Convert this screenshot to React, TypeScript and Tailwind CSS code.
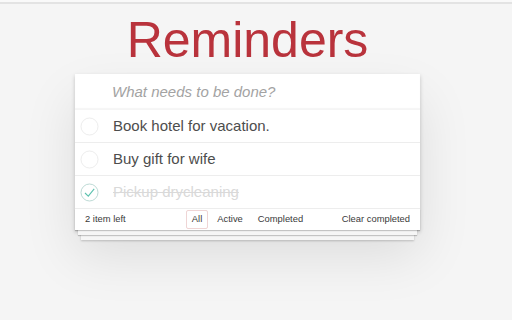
import React from "react";

const items = [
  { text: "Book hotel for vacation.", done: false },
  { text: "Buy gift for wife", done: false },
  { text: "Pickup drycleaning", done: true },
];

function Circle({ done }: { done: boolean }) {
  return (
    <svg width="19" height="19" viewBox="0 0 19 19" className="shrink-0">
      <circle cx="9.5" cy="9.5" r="8.5" fill="none" stroke={done ? "#bddad5" : "#ededed"} strokeWidth="1" />
      {done && (
        <path d="M5 10 L8.3 13.2 L14.2 5.8" fill="none" stroke="#5dc2af" strokeWidth="1.1" />
      )}
    </svg>
  );
}

export default function App() {
  return (
    <div
      className="min-h-[320px] bg-[#f5f5f5] text-[#4d4d4d]"
      style={{ fontFamily: '"Liberation Sans", Arial, sans-serif' }}
    >
      <div className="h-[2px] bg-[#f9f9f9]" />
      <div className="h-[2px] bg-[#e3e3e3]" />
      <div className="w-[495px] flex flex-col items-center">
        <h1 className="mt-[11px] text-[50px] leading-[50px] text-[#b9333c] font-normal">Reminders</h1>
        <div className="mt-[9px] w-[345px] bg-white shadow-[0_2px_4px_rgba(0,0,0,0.2),0_25px_50px_rgba(0,0,0,0.1)]">
          <div className="h-[36px] flex items-center pl-[37px] shadow-[inset_0_-2px_1px_rgba(0,0,0,0.04)]">
            <span className="italic text-[15px] text-[#a3a3a3]">What needs to be done?</span>
          </div>
          {items.map((it) => (
            <div key={it.text} className="h-[33px] flex items-center border-b border-[#ededed] pl-[5px]">
              <Circle done={it.done} />
              <span
                className={
                  "ml-[14px] text-[15px] " +
                  (it.done ? "line-through text-[#d9d9d9]" : "text-[#4d4d4d]")
                }
              >
                {it.text}
              </span>
            </div>
          ))}
          <div className="relative h-[21px] grid grid-cols-[1fr_auto_1fr] items-center px-[10px] text-[9.4px] text-[#3a3a3a] before:content-[''] before:absolute before:left-0 before:right-0 before:bottom-0 before:h-[21px] before:shadow-[0_1px_1px_rgba(0,0,0,0.2),0_8px_0_-3px_#f6f6f6,0_9px_1px_-3px_rgba(0,0,0,0.2),0_16px_0_-6px_#f6f6f6,0_17px_2px_-6px_rgba(0,0,0,0.2)]">
            <span>2 item left</span>
            <div className="flex items-center gap-[3px]">
              <span className="px-[5px] py-[1px] border border-[rgba(175,47,47,0.2)] rounded-[2px]">All</span>
              <span className="px-[5px] py-[1px] border border-transparent">Active</span>
              <span className="px-[5px] py-[1px] border border-transparent">Completed</span>
            </div>
            <span className="justify-self-end">Clear completed</span>
          </div>
        </div>
      </div>
    </div>
  );
}
